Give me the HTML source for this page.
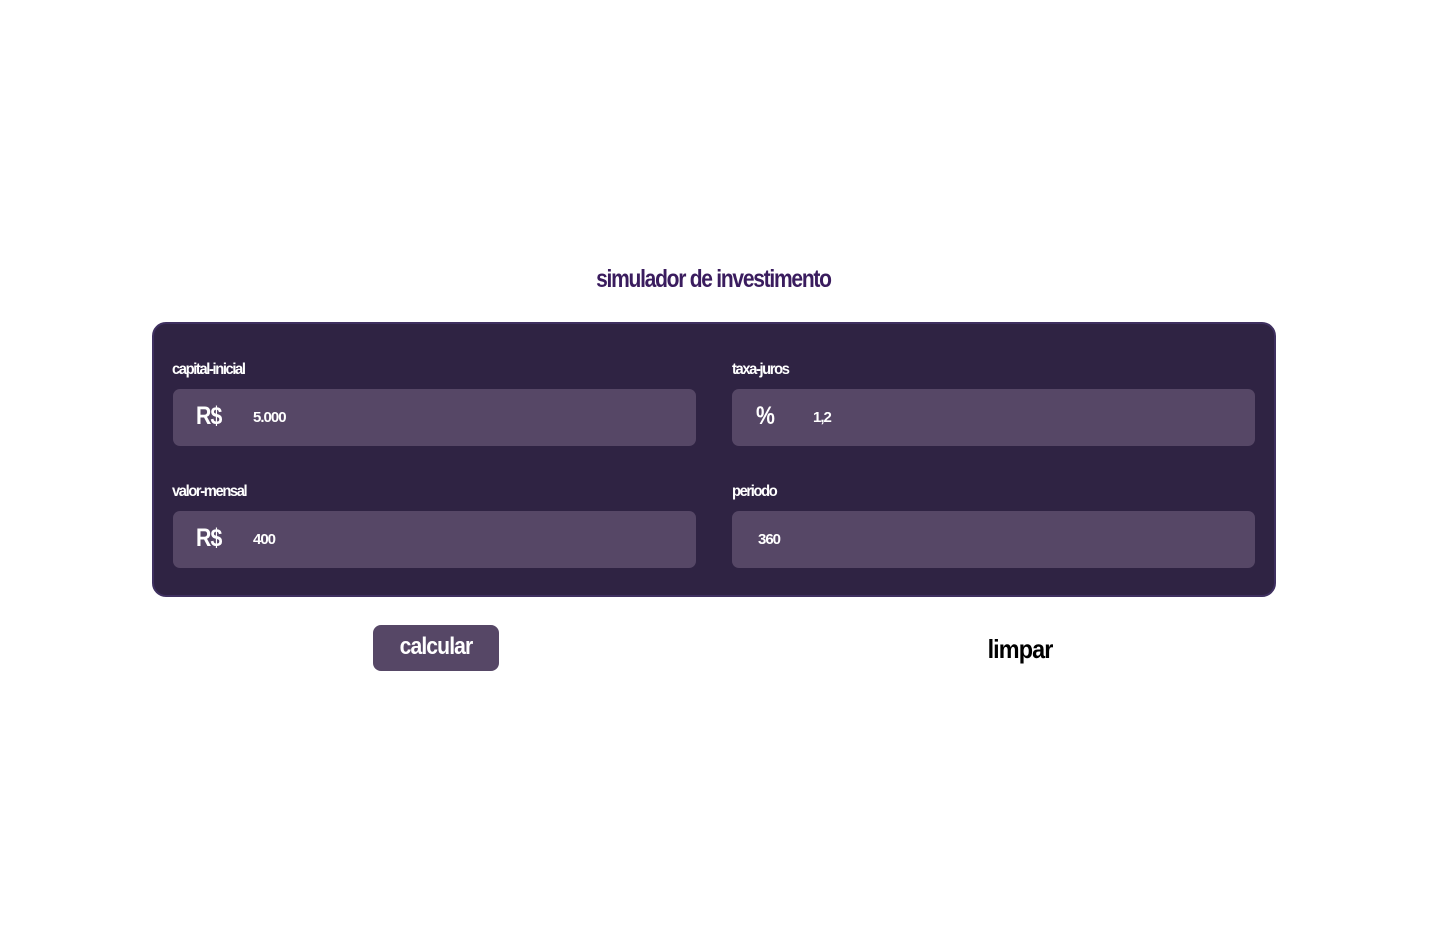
<!DOCTYPE html>
<html><head><style>
body{margin:0;width:1447px;height:937px;background:#fff;position:relative;font-family:"Liberation Sans",sans-serif;overflow:hidden}
.c{position:absolute;font-weight:bold;letter-spacing:-1px;transform-origin:0 50%;white-space:nowrap}
.title{left:0;width:1427px;text-align:center;top:265px;font-size:25px;color:#3a1c5e;letter-spacing:-1.5px;transform:scaleX(0.84);transform-origin:713px 50%}
.panel{position:absolute;left:152px;top:322px;width:1120px;height:271px;background:#2f2343;border:2px solid #3f3060;border-radius:14px}
.inp{position:absolute;width:523px;height:57px;background:#564766;border-radius:7px}
.lab{color:#fff;font-size:16px;letter-spacing:-1.5px;transform:scaleX(0.92)}
.pre{color:#fff;font-size:25px;letter-spacing:-1px;transform:scaleX(0.85)}
.val{color:#fff;font-size:15px;letter-spacing:-1px}
.btn{position:absolute;left:373px;top:625px;width:126px;height:46px;background:#564766;border-radius:8px}
</style></head><body>
<div class="c title">simulador de investimento</div>
<div class="panel"></div>
<div class="c lab" style="left:172px;top:361px">capital-inicial</div>
<div class="c lab" style="left:732px;top:361px">taxa-juros</div>
<div class="c lab" style="left:172px;top:483px">valor-mensal</div>
<div class="c lab" style="left:732px;top:483px">periodo</div>
<div class="inp" style="left:173px;top:389px"></div>
<div class="inp" style="left:732px;top:389px"></div>
<div class="inp" style="left:173px;top:511px"></div>
<div class="inp" style="left:732px;top:511px"></div>
<div class="c pre" style="left:196px;top:402px">R$</div>
<div class="c val" style="left:253px;top:409px">5.000</div>
<div class="c pre" style="left:756px;top:402px">%</div>
<div class="c val" style="left:813px;top:409px">1,2</div>
<div class="c pre" style="left:196px;top:524px">R$</div>
<div class="c val" style="left:253px;top:531px">400</div>
<div class="c val" style="left:758px;top:531px">360</div>
<div class="btn"></div>
<div class="c" style="left:373px;width:126px;text-align:center;top:633px;font-size:24px;color:#fff;transform:scaleX(0.88);transform-origin:63px 50%">calcular</div>
<div class="c" style="left:960px;width:120px;text-align:center;top:634px;font-size:26px;color:#000;transform:scaleX(0.9);transform-origin:60px 50%">limpar</div>
</body></html>
